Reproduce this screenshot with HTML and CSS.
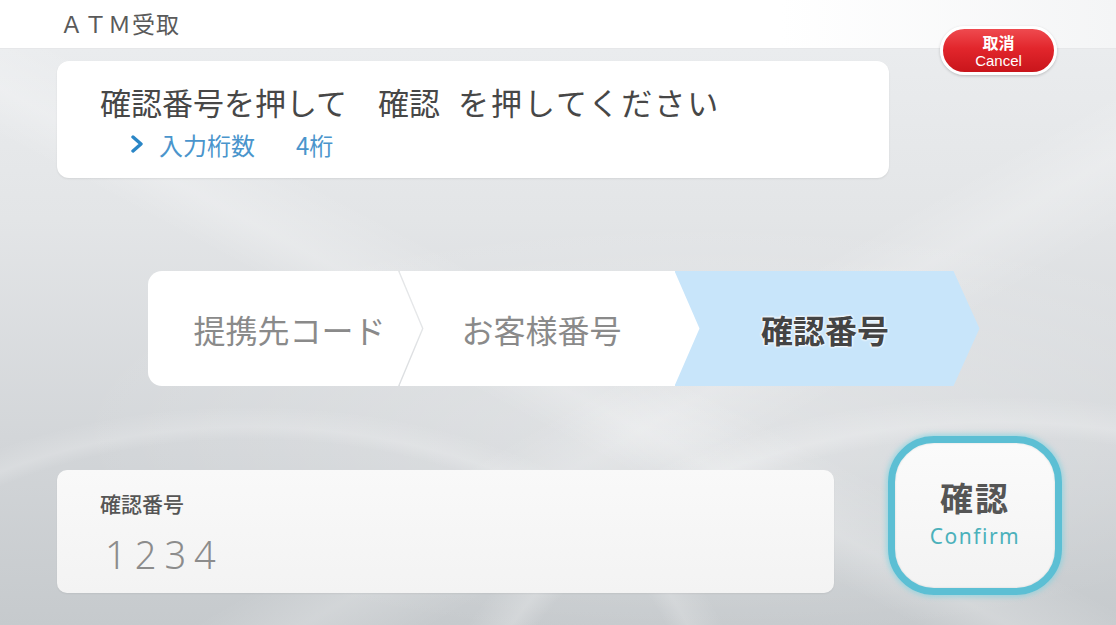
FILE: index.html
```html
<!DOCTYPE html>
<html lang="ja">
<head>
<meta charset="utf-8">
<title>ATM受取</title>
<link rel="stylesheet" href="styles.css">
</head>
<body>
<div class="screen">
  <header class="topbar">
    <span class="title">ＡＴＭ受取</span>
  </header>
  <button class="cancel"><span class="cancel-ja">取消</span><span class="cancel-en">Cancel</span></button>
  <main class="main">
    <section class="instruction">
      <p class="instruction-text">確認番号を押して　確認 <span class="wide">を押してください</span></p>
      <p class="instruction-sub">
        <svg class="chev" width="14" height="18" viewBox="0 0 14 18"><path d="M3 2 L11 9 L3 16" fill="none" stroke="#2a86c6" stroke-width="3.4" stroke-linecap="round" stroke-linejoin="round"/></svg>
        <span class="sub-label">入力桁数</span><span class="sub-value">4桁</span>
      </p>
    </section>
    <nav class="steps">
      <div class="step step1"><span>提携先コード</span></div>
      <div class="step step2"><span>お客様番号</span></div>
      <div class="step step3"><span>確認番号</span></div>
    </nav>
    <section class="entry-row">
      <div class="entry">
        <div class="entry-label">確認番号</div>
        <div class="entry-value">1234</div>
      </div>
      <button class="confirm"><span class="confirm-ja">確認</span><span class="confirm-en">Confirm</span></button>
    </section>
  </main>
</div>
</body>
</html>
```
FILE: styles.css
```css
* { box-sizing: border-box; }
html, body { margin: 0; padding: 0; }
body {
  width: 1116px;
  height: 625px;
  overflow: hidden;
  font-family: "Noto Sans CJK JP", "Noto Sans", sans-serif;
}
.screen {
  position: relative;
  width: 1116px;
  height: 625px;
  background:
    linear-gradient(28deg, rgba(255,255,255,0) 40%, rgba(255,255,255,0.22) 44%, rgba(255,255,255,0) 50%),
    linear-gradient(150deg, rgba(255,255,255,0) 58%, rgba(255,255,255,0.2) 63%, rgba(255,255,255,0) 69%),
    radial-gradient(ellipse 820px 520px at 1000px 760px, rgba(255,255,255,0) 62%, rgba(255,255,255,0.22) 65%, rgba(255,255,255,0) 70%),
    radial-gradient(ellipse 700px 420px at 250px 700px, rgba(255,255,255,0) 62%, rgba(255,255,255,0.18) 65%, rgba(255,255,255,0) 70%),
    radial-gradient(ellipse 900px 300px at 700px 430px, rgba(255,255,255,0.3), rgba(255,255,255,0) 70%),
    linear-gradient(180deg, #eceef0 0%, #e3e5e7 35%, #d3d6d9 70%, #c6cacd 100%);
}
.topbar {
  height: 49px;
  background: linear-gradient(90deg, #ffffff 0%, #ffffff 70%, #f4f5f6 100%);
  border-bottom: 1px solid #e6e7e9;
  padding: 8px 0 0 60px;
}
.title {
  font-size: 23px;
  color: #5a5a5a;
  letter-spacing: 1px;
  line-height: 30px;
}
.cancel {
  position: absolute;
  left: 940px;
  top: 26px;
  width: 117px;
  height: 49px;
  border-radius: 25px;
  border: 3px solid #ffffff;
  background: linear-gradient(180deg, #ef4a4f 0%, #e2262c 45%, #c9151b 100%);
  box-shadow: 0 1px 3px rgba(0,0,0,0.2);
  color: #fff;
  display: flex;
  flex-direction: column;
  align-items: center;
  justify-content: center;
  gap: 1px;
  padding: 0;
  font-family: "Noto Sans CJK JP", "Noto Sans", sans-serif;
}
.cancel-ja { font-size: 16px; font-weight: bold; line-height: 18px; }
.cancel-en { font-size: 15px; line-height: 17px; font-family: "Liberation Sans", sans-serif; }
.main {
  padding: 12px 0 0 57px;
}
.instruction {
  width: 832px;
  height: 117px;
  background: #ffffff;
  border-radius: 12px;
  box-shadow: 0 1px 2px rgba(0,0,0,0.08);
  padding: 20px 0 0 43px;
}
.instruction-text {
  margin: 0;
  font-size: 31px;
  line-height: 42px;
  word-spacing: 11px;
  color: #474747;
}
.wide { letter-spacing: 2px; }
.instruction-sub {
  margin: 5px 0 0 0;
  display: flex;
  align-items: center;
  padding-left: 30px;
  height: 32px;
  color: #4a95cc;
  font-size: 24px;
}
.chev { margin-right: 15px; }
.sub-label { margin-right: 41px; }
.steps {
  display: flex;
  margin: 93px 0 0 91px;
  height: 115px;
  width: 830px;
}
.step {
  flex: none;
  height: 115px;
  display: flex;
  align-items: center;
  justify-content: center;
  font-size: 32px;
  color: #8a8a8a;
}
.step1 {
  width: 274px;
  background: #ffffff;
  border-radius: 14px 0 0 14px;
  clip-path: polygon(0 0, 250px 0, 274px 57.5px, 250px 115px, 0 115px);
  padding-left: 9px;
}
.step2 {
  width: 304px;
  margin-left: -22.5px;
  background: #ffffff;
  clip-path: polygon(0 0, 277px 0, 302px 57.5px, 277px 115px, 0 115px, 24px 57.5px);
  padding-right: 20px;
}
.step3 {
  width: 305px;
  margin-left: -29px;
  background: #c8e5fa;
  clip-path: polygon(0 0, 279px 0, 305px 57.5px, 279px 115px, 0 115px, 25px 57.5px);
  padding-right: 4px;
  color: #444;
  font-weight: bold;
  text-shadow: 0 0 3px #fff, 0 0 3px #fff, 0 0 2px #fff;
}
.entry-row {
  display: flex;
  align-items: flex-end;
  margin-top: 50px;
  height: 159px;
}
.entry {
  width: 777px;
  height: 123px;
  margin-bottom: 2px;
  background: linear-gradient(180deg, #f9f9f9 0%, #f3f3f3 100%);
  border-radius: 10px;
  padding: 18px 0 0 43px;
  box-shadow: 0 1px 2px rgba(0,0,0,0.06);
}
.entry-label {
  font-size: 21px;
  line-height: 30px;
  color: #555;
  font-weight: 500;
}
.entry-value {
  margin-top: 13px;
  padding-left: 5px;
  font-family: "Noto Sans", sans-serif;
  font-size: 38px;
  line-height: 46px;
  letter-spacing: 8px;
  color: #8c8c8c;
  font-weight: 300;
}
.confirm {
  margin-left: 54px;
  width: 174px;
  height: 159px;
  border-radius: 46px;
  border: 7px solid #5cbfd4;
  background: linear-gradient(180deg, #fbfbfb 0%, #f3f3f3 100%);
  box-shadow: 0 0 5px 2px rgba(120, 210, 225, 0.6), inset 0 0 2px rgba(0,0,0,0.15);
  display: flex;
  flex-direction: column;
  align-items: center;
  justify-content: center;
  padding: 0;
  font-family: "Noto Sans CJK JP", "Noto Sans", sans-serif;
}
.confirm-ja {
  font-size: 33px;
  font-weight: bold;
  color: #555;
  line-height: 40px;
  margin-top: -6px;
  letter-spacing: 2px;
}
.confirm-en {
  font-family: "Noto Sans", sans-serif;
  font-size: 21px;
  line-height: 26px;
  letter-spacing: 1.5px;
  color: #4bb1bb;
  margin-top: 6px;
}
```
